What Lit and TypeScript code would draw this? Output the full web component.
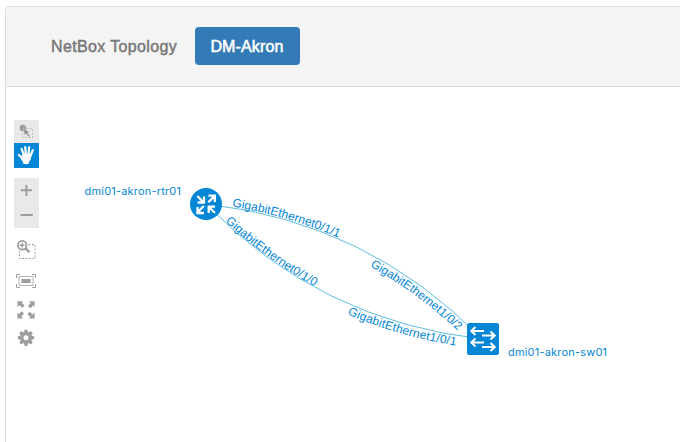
import { LitElement, html, svg, css } from "lit";
import { customElement } from "lit/decorators.js";

const TOP_LINK = "M206 204 Q368 222 482 339";
const BOTTOM_LINK = "M206 204 Q320 321 482 339";

@customElement("topology-toolbar")
class TopologyToolbar extends LitElement {
  static styles = css`
    :host { display: flex; flex-direction: column; width: 25px; }
    .tool { height: 25px; display: block; }
    .select { height: 23px; background: #e9e9e9; }
    .hand { background: #0386d6; }
    .zoom { background: #e9e9e9; height: 50px; margin-top: 10px; }
    .area { margin-top: 8px; height: 28px; }
    .fit { margin-top: 5px; height: 24px; }
    .full { margin-top: 4px; height: 26px; }
    .gear { margin-top: 3px; height: 25px; }
    svg { display: block; }
    .f { fill: #9e9e9e; }
    .s { stroke: #9e9e9e; fill: none; }
  `;
  render() {
    return html`
      <div class="tool select"><svg width="25" height="23">
        <circle class="f" cx="8.8" cy="8" r="3.2" />
        <rect class="s" x="8.5" y="8.5" width="10" height="9" stroke-dasharray="2 1.5" opacity=".6" />
        <path d="M9.2 8.5l6.4 3.4-2.1.9 2.6 3.4-1.3 1-2.6-3.5-1.5 1.8z" fill="#8f8f8f" stroke="#e9e9e9" stroke-width=".4" />
      </svg></div>
      <div class="tool hand"><svg width="25" height="25">
        <path d="M7.6 6L9.9 12M11.2 4l.7 7.7M15.1 4.4l-.6 7.5M18.8 7.2l-2.4 6.2M4.9 12l4.4 3.8" stroke="#fff" stroke-width="2.2" stroke-linecap="round" />
        <path d="M8.9 10.5h8.6l-.8 6-2 2.9v1.6H9.3v-1.5l-2.8-4z" fill="#fff" />
      </svg></div>
      <div class="tool zoom"><svg width="25" height="50">
        <path class="s" d="M6.8 12.2h11.2M12.4 6.8v11.2M6.5 37h12.3" stroke-width="2" />
      </svg></div>
      <div class="tool area"><svg width="25" height="28">
        <path class="s" d="M14.5 8.5h6.5v14H5.5V15" stroke-dasharray="2 1.5" />
        <circle class="s" cx="8.2" cy="9.2" r="4.3" stroke-width="1.8" fill="#fff" />
        <path class="s" d="M11.4 12.4l4 3.7" stroke-width="2.6" />
        <path class="s" d="M5.8 9.2h4.8M8.2 6.8v4.8" stroke-width="1.5" />
      </svg></div>
      <div class="tool fit"><svg width="25" height="24">
        <path class="s" d="M6 5.5H2.5V9M18 5.5h3.5V9M2.5 15v3.5H6M21.5 15v3.5H18" />
        <rect class="s" x="5" y="7.5" width="14" height="9" opacity=".75" />
        <rect class="f" x="7.5" y="10" width="9" height="4" />
      </svg></div>
      <div class="tool full"><svg width="25" height="26">
        ${[0, 90, 180, 270].map((a) => svg`<path class="f" transform="rotate(${a} 12 12.8)" d="M3.4 4.2h5.8L7.8 5.7l2.8 2.8-2.4 2.4-2.8-2.8-2 1.9z" />`)}
      </svg></div>
      <div class="tool gear"><svg width="25" height="25">
        <circle class="s" cx="12" cy="11.8" r="4.3" stroke-width="3.6" />
        ${[0, 45, 90, 135, 180, 225, 270, 315].map((a) => svg`<path class="f" transform="rotate(${a} 12 11.8)" d="M10 6.8l.5-3.1h3l.5 3.1z" />`)}
      </svg></div>
    `;
  }
}

@customElement("topology-map")
class TopologyMap extends LitElement {
  static styles = css`
    :host, svg { display: block; }
    .link { fill: none; stroke: #5dbfdf; stroke-width: 1; }
    text { fill: #0386d6; text-rendering: geometricPrecision; }
    .port { font: 12px "Liberation Sans", Arial, sans-serif; }
    .name { font: 11px Inter, sans-serif; }
    .body { fill: #0386d6; }
    .arrow { fill: none; stroke: #fff; stroke-width: 2; }
    .router { stroke-width: 2.3; }
  `;
  render() {
    return html`<svg width="680" height="355" viewBox="0 87 680 355">
      <defs><path id="top" d=${TOP_LINK} /><path id="bottom" d=${BOTTOM_LINK} /></defs>
      <path class="link" d=${TOP_LINK} />
      <path class="link" d=${BOTTOM_LINK} />
      <text class="port" dy="-1"><textPath href="#top" startOffset="26" textLength="111">GigabitEthernet0/1/1</textPath></text>
      <text class="port" dy="-1"><textPath href="#bottom" startOffset="26" textLength="111">GigabitEthernet0/1/0</textPath></text>
      <text class="port" dy="11"><textPath href="#top" startOffset="178.5" textLength="112">GigabitEthernet1/0/2</textPath></text>
      <text class="port" dy="10"><textPath href="#bottom" startOffset="178" textLength="111">GigabitEthernet1/0/1</textPath></text>
      <circle class="body" cx="206" cy="204" r="16" />
      <g class="arrow router">
        <path d="M197.3 196l6 6M204 196.5v6h-6.3M208.3 202.3l6-6M208.5 195.7h6.3v6.3M203.8 206l-6 6M204 213h-6.5v-6M215 213l-6-6M208.7 213v-6.3h6.3" />
      </g>
      <rect class="body" x="467" y="323" width="32" height="32" rx="2.5" />
      <g class="arrow">
        <path d="M471.5 331h12.5M475.5 327l-4.2 4 4.2 4M482 335.5h12.5M490.5 331.5l4.2 4-4.2 4M471.5 342.5h12.5M475.5 338.5l-4.2 4 4.2 4M482 347h12.5M490.5 343l4.2 4-4.2 4" />
      </g>
      <text class="name" x="84.5" y="195" textLength="96.5">dmi01-akron-rtr01</text>
      <text class="name" x="508" y="356" textLength="99">dmi01-akron-sw01</text>
    </svg>`;
  }
}

@customElement("app-root")
class AppRoot extends LitElement {
  static styles = css`
    :host { display: flow-root; height: 442px; overflow: hidden; background: #fff; }
    .panel { box-sizing: border-box; height: 442px; margin: 6px 0 0 5px; width: 690px; border: 1px solid #ddd; border-radius: 4px 0 0 0; }
    header { box-sizing: border-box; height: 80px; display: flex; align-items: center; padding: 0 0 1px 45px; gap: 17px; background: #f4f4f4; border-bottom: 1px solid #ddd; border-radius: 3px 0 0 0; font: 16px "Liberation Sans", Arial, sans-serif; -webkit-text-stroke: .45px; }
    .brand { color: #777; width: 127px; padding-top: 2px; white-space: nowrap; letter-spacing: .36px; }
    button { font: inherit; color: #fff; background: #337ab7; border: 0; border-radius: 4px; height: 38px; width: 105px; padding: 2px 1px 0 0; letter-spacing: .15px; -webkit-text-stroke: .55px; }
    .stage { position: relative; height: 355px; }
    topology-toolbar { position: absolute; left: 8px; top: 33px; }
    topology-map { margin-left: -6px; }
  `;
  render() {
    return html`<main class="panel">
      <header><span class="brand">NetBox Topology</span><button>DM-Akron</button></header>
      <section class="stage"><topology-map></topology-map><topology-toolbar></topology-toolbar></section>
    </main>`;
  }
}
